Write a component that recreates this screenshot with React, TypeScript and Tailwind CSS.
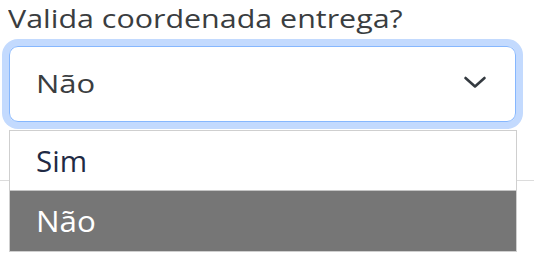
import React from "react";

export default function App() {
  return (
    <div
      className="relative w-[534px] h-[266px] bg-white overflow-hidden text-[#212529]"
      style={{ fontFamily: '"Open Sans", "Noto Sans", sans-serif' }}
    >
      <div className="pl-[9px] w-[516px]">
        <label className="block text-[26px] leading-[36px] -ml-[1px] text-[#3a3d40] origin-left scale-x-[1.17] whitespace-nowrap">
          Valida coordenada entrega?
        </label>
        <div className="mt-[10px] h-[76px] rounded-[9px] border-[1.5px] border-[#86b7fe] shadow-[0_0_0_7px_#c3dafe] flex items-center justify-between pl-[26px] pr-[28px]">
          <span className="text-[25px] leading-none text-[#3a3d40] origin-left scale-x-[1.24] -mt-[2px]">Não</span>
          <svg width="24" height="13" viewBox="0 0 24 13" fill="none" className="-mt-[3px]">
            <path d="M2.5 2 L12 10.5 L21.5 2" stroke="#343a40" strokeWidth="2.6" strokeLinecap="round" strokeLinejoin="round" />
          </svg>
        </div>
      </div>
      <div className="mt-[58px] border-t border-[#dcdcdc]" />
      <div className="absolute left-[9px] top-[130px] w-[508px] border border-[#cfcfcf] bg-white">
        <div className="h-[60px] flex items-center pl-[26px] border-b border-[#c4c4c4]">
          <span className="text-[29px] text-[#1f2a44] origin-left scale-x-[1.02]">Sim</span>
        </div>
        <div className="h-[60px] flex items-center pl-[26px] bg-[#767676]">
          <span className="text-[29px] text-white origin-left scale-x-[1.08]">Não</span>
        </div>
      </div>
    </div>
  );
}
